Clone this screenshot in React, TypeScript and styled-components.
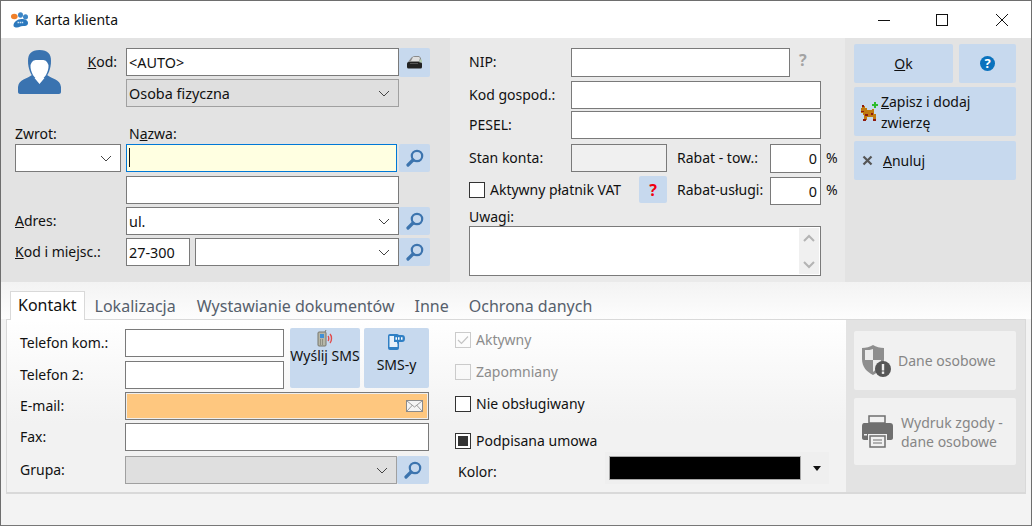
import styled, { createGlobalStyle } from "styled-components";

const GlobalStyle = createGlobalStyle`
  html, body {
    margin: 0;
    padding: 0;
    background: #f3f3f3;
  }
  * {
    box-sizing: border-box;
  }
`;

const Window = styled.div`
  width: 1032px;
  height: 526px;
  border: 1px solid #6e6e6e;
  border-bottom-color: #777;
  background: #f3f3f3;
  color: #111;
  font-family: "Noto Sans", "Open Sans", sans-serif;
  font-size: 14px;
  line-height: 18px;
  overflow: hidden;
  display: flex;
  flex-direction: column;
`;

const TitleBar = styled.div`
  height: 37px;
  background: #fff;
  display: flex;
  align-items: center;
  padding-left: 9px;
  flex-shrink: 0;
`;

const TitleText = styled.div`
  margin-left: 6px;
  flex: 1;
`;

const WinButton = styled.div<{ $w: number }>`
  width: ${(p) => p.$w}px;
  height: 37px;
  display: flex;
  align-items: center;
  justify-content: center;
`;

const Header = styled.div`
  display: flex;
  height: 244px;
  flex-shrink: 0;
`;

const LeftPanel = styled.div`
  width: 449px;
  background: #e3e3e3;
  padding: 10px 0 0 14px;
  display: flex;
  flex-direction: column;
`;

const MidPanel = styled.div`
  width: 395px;
  background: #eaeaea;
  padding: 10px 0 0 19px;
  display: flex;
  flex-direction: column;
`;

const RightPanel = styled.div`
  flex: 1;
  background: #e3e3e3;
  padding: 6px 0 0 9px;
  display: flex;
  flex-direction: column;
`;

const TopBlock = styled.div`
  display: flex;
`;

const AvatarIcon = styled.svg`
  width: 43px;
  height: 44px;
  margin: 2px 0 0 3px;
  flex-shrink: 0;
`;

const TopFields = styled.div`
  display: flex;
  flex-direction: column;
`;

const Row = styled.div<{ $mt?: number; $pl?: number; $h?: number }>`
  display: flex;
  align-items: flex-start;
  margin-top: ${(p) => p.$mt ?? 0}px;
  padding-left: ${(p) => p.$pl ?? 0}px;
  height: ${(p) => p.$h ?? 28}px;
`;

const Label = styled.div<{ $w?: number; $right?: boolean; $pr?: number; $ml?: number }>`
  width: ${(p) => p.$w ?? 100}px;
  margin-left: ${(p) => p.$ml ?? 0}px;
  padding-right: ${(p) => p.$pr ?? 0}px;
  text-align: ${(p) => (p.$right ? "right" : "left")};
  height: 28px;
  line-height: 27px;
  white-space: nowrap;
  flex-shrink: 0;
`;

const CaptionRow = styled.div`
  height: 37px;
  display: flex;
  align-items: flex-end;
  padding-bottom: 1px;
`;

const Caption = styled.div<{ $w?: number }>`
  width: ${(p) => p.$w ?? 114}px;
  line-height: 18px;
  flex-shrink: 0;
`;

const Field = styled.div<{ $w: number; $h?: number; $bg?: string; $ml?: number; $mt?: number; $align?: string }>`
  width: ${(p) => p.$w}px;
  height: ${(p) => p.$h ?? 28}px;
  margin-left: ${(p) => p.$ml ?? 0}px;
  margin-top: ${(p) => p.$mt ?? 0}px;
  background: ${(p) => p.$bg ?? "#fff"};
  border: 1px solid #7a7a7a;
  padding: 0 3px 0 2px;
  font-size: 14.4px;
  line-height: 27px;
  text-align: ${(p) => p.$align ?? "left"};
  flex-shrink: 0;
`;

const FocusField = styled(Field)`
  background: #ffffe1;
  border-color: #0078d7;
`;

const Caret = styled.div`
  width: 1px;
  height: 19px;
  margin: 3px 0 0 0;
  background: #111;
`;

const MailField = styled(Field)`
  background: #fec77f;
  box-shadow: inset 0 0 0 1px #eee;
  display: flex;
  align-items: center;
  justify-content: flex-end;
  padding: 0 5px 0 0;
`;

const SelectField = styled(Field)<{ $muted?: boolean }>`
  background: ${(p) => (p.$muted ? "#dfdfdf" : "#fff")};
  border-color: ${(p) => (p.$muted ? "#a0a0a0" : "#7a7a7a")};
  display: flex;
  align-items: center;
  justify-content: space-between;
  padding: 1px 8px 0 2px;
`;

const IconButton = styled.div<{ $w?: number; $h?: number; $ml?: number }>`
  width: ${(p) => p.$w ?? 31}px;
  height: ${(p) => p.$h ?? 28}px;
  margin-left: ${(p) => p.$ml ?? 0}px;
  background: #c7d9ee;
  border-radius: 2px;
  display: flex;
  align-items: center;
  justify-content: center;
  flex-shrink: 0;
`;

const RedMark = styled.span`
  color: #f00010;
  font-weight: 700;
  font-size: 16px;
`;

const GrayMark = styled.span`
  width: 30px;
  padding-left: 9px;
  color: #a3a3a3;
  font-weight: 700;
  font-size: 16px;
  line-height: 24px;
`;

const Percent = styled.span`
  margin-left: 5px;
  line-height: 27px;
`;

const CheckRow = styled.div<{ $mt?: number; $disabled?: boolean }>`
  display: flex;
  align-items: center;
  height: 16px;
  margin-top: ${(p) => p.$mt ?? 0}px;
  color: ${(p) => (p.$disabled ? "#8c8c8c" : "#111")};
  white-space: nowrap;
`;

const Check = styled.div<{ $disabled?: boolean }>`
  width: 16px;
  height: 16px;
  border: 1px solid ${(p) => (p.$disabled ? "#cbcbcb" : "#333")};
  background: ${(p) => (p.$disabled ? "transparent" : "#fff")};
  margin-right: 5px;
  display: flex;
  align-items: center;
  justify-content: center;
  flex-shrink: 0;
`;

const CheckFill = styled.div`
  width: 10px;
  height: 10px;
  background: #333;
`;

const VatBox = styled.div`
  width: 170px;
  height: 27px;
  display: flex;
  align-items: center;
  flex-shrink: 0;
`;

const NoteCaption = styled.div`
  height: 18px;
  margin-top: 3px;
  line-height: 18px;
`;

const NoteBox = styled.div`
  width: 352px;
  height: 50px;
  border: 1px solid #7a7a7a;
  background: #fff;
  display: flex;
  justify-content: flex-end;
  padding: 1px;
`;

const ScrollBar = styled.div`
  width: 20px;
  background: #f0f0f0;
  display: flex;
  flex-direction: column;
  align-items: center;
  justify-content: space-between;
  padding: 6px 0 5px;
`;

const ActionRow = styled.div<{ $mt?: number }>`
  display: flex;
  gap: 6px;
  margin-top: ${(p) => p.$mt ?? 0}px;
`;

const ActionButton = styled.div<{ $w?: number; $h?: number; $center?: boolean }>`
  width: ${(p) => p.$w ?? 162}px;
  height: ${(p) => p.$h ?? 39}px;
  background: #c7d9ee;
  border-radius: 2px;
  display: flex;
  align-items: center;
  justify-content: ${(p) => (p.$center ? "center" : "flex-start")};
  padding-left: ${(p) => (p.$center ? 0 : 5)}px;
  line-height: 21px;
`;

const ActionText = styled.div<{ $ml?: number; $mt?: number }>`
  margin-left: ${(p) => p.$ml ?? 0}px;
  margin-top: ${(p) => p.$mt ?? 0}px;
`;

const HelpDot = styled.div`
  width: 15px;
  height: 15px;
  border-radius: 50%;
  background: #0a72bd;
  color: #fff;
  font-weight: 700;
  font-size: 13px;
  line-height: 15px;
  text-align: center;
`;

const TabStrip = styled.div`
  height: 37px;
  flex-shrink: 0;
  display: flex;
  align-items: flex-end;
  padding-left: 9px;
  background: linear-gradient(#f3f3f3, #fdfdfd);
`;

const Tab = styled.div<{ $active?: boolean; $ml?: number }>`
  height: ${(p) => (p.$active ? 29 : 27)}px;
  margin-left: ${(p) => p.$ml ?? 0}px;
  margin-bottom: ${(p) => (p.$active ? -1 : 0)}px;
  padding: 0 7px;
  font-size: 16px;
  line-height: 27px;
  color: ${(p) => (p.$active ? "#111" : "#56606c")};
  background: ${(p) => (p.$active ? "#fff" : "transparent")};
  border: 1px solid ${(p) => (p.$active ? "#d9d9d9" : "transparent")};
  border-bottom: none;
  position: relative;
  z-index: 1;
  white-space: nowrap;
`;

const TabPanel = styled.div`
  width: 1020px;
  height: 175px;
  margin-left: 5px;
  border: 1px solid #d9d9d9;
  border-bottom-width: 2px;
  background: linear-gradient(#fff, #f2f2f2 60%);
  display: flex;
  flex-shrink: 0;
`;

const FormColumn = styled.div`
  width: 422px;
  padding: 9px 0 0 13px;
  flex-shrink: 0;
`;

const PhoneBlock = styled.div`
  display: flex;
`;

const PhoneFields = styled.div`
  width: 270px;
  flex-shrink: 0;
`;

const SmsButton = styled.div<{ $w: number; $ml: number; $top: number }>`
  width: ${(p) => p.$w}px;
  height: 60px;
  margin-left: ${(p) => p.$ml}px;
  margin-top: -1px;
  padding-top: ${(p) => p.$top}px;
  background: #c7d9ee;
  border-radius: 2px;
  display: flex;
  flex-direction: column;
  align-items: center;
  white-space: nowrap;
  line-height: 18px;
  flex-shrink: 0;
`;

const ChecksColumn = styled.div`
  width: 417px;
  padding: 12px 0 0 26px;
  flex-shrink: 0;
`;

const ColorRow = styled.div`
  display: flex;
  align-items: center;
  margin-top: 3px;
  padding-left: 3px;
`;

const ColorLabel = styled.div`
  width: 147px;
  padding-top: 7px;
`;

const ColorPicker = styled.div`
  width: 224px;
  height: 32px;
  background: #efefef;
  display: flex;
  align-items: center;
  padding-left: 4px;
`;

const ColorSwatch = styled.div`
  width: 192px;
  height: 24px;
  background: #000;
  border: 1px solid #a8a8a8;
`;

const ColorArrow = styled.div`
  margin-left: 12px;
  width: 0;
  height: 0;
  border-left: 4px solid transparent;
  border-right: 4px solid transparent;
  border-top: 5px solid #111;
`;

const SidePanel = styled.div`
  flex: 1;
  background: #e3e3e3;
  padding: 11px 0 0 8px;
`;

const SideButton = styled.div<{ $h: number; $mt?: number }>`
  width: 162px;
  height: ${(p) => p.$h}px;
  margin-top: ${(p) => p.$mt ?? 0}px;
  background: #f1f1f1;
  border-radius: 2px;
  color: #868686;
  display: flex;
  align-items: center;
  padding-left: 7px;
  line-height: 19px;
`;

const SideText = styled.div`
  margin-left: 7px;
`;

const CrossSvg = styled.svg`
  width: 11px;
  height: 11px;
  margin-left: 3px;
`;

const Chevron = () => (
  <svg width="12" height="7" viewBox="0 0 12 7" fill="none">
    <path d="M1 1l5 5 5-5" stroke="#444" strokeWidth="1" />
  </svg>
);

const ScrollChevron = ({ up }: { up?: boolean }) => (
  <svg width="12" height="8" viewBox="0 0 12 8" fill="none">
    <path d={up ? "M1 7l5-5 5 5" : "M1 1l5 5 5-5"} stroke="#b4b4b4" strokeWidth="2" />
  </svg>
);

const SearchIcon = () => (
  <svg width="18" height="18" viewBox="0 0 18 18" fill="none">
    <circle cx="11" cy="7" r="5.2" stroke="#3c74ae" strokeWidth="2.2" />
    <path d="M7 11L2 16" stroke="#3c74ae" strokeWidth="3.2" strokeLinecap="round" />
  </svg>
);

const PawLogo = () => (
  <svg width="19" height="18" viewBox="0 0 19 18">
    <ellipse cx="4.300" cy="5.500" rx="3.300" ry="2.700" fill="#f0802a" />
    <ellipse cx="10.500" cy="4" rx="2.500" ry="2.800" fill="#3d86c6" />
    <ellipse cx="15.500" cy="5.800" rx="2.500" ry="2.600" fill="#3d86c6" />
    <path d="M3.500 14.500c0-3.500 4-6.500 8-6.500 4 0 6.500 1.500 6.500 4s-2 3-5 3-3.500 1.500-6 1.500c-2 0-3.500-.5-3.500-2z" fill="#2b78bd" />
    <path d="M7.500 11.500h6" stroke="#cfe3f5" strokeWidth="1.600" strokeDasharray="1.500 .6" />
  </svg>
);

const Avatar = () => (
  <AvatarIcon viewBox="0 0 43 44">
    <path d="M13 24l8.500 12 8.500-12z" fill="#fff" />
    <path d="M14 25C9 29 1 29 0 37v5c0 1 1 2 2 2h39c1 0 2-1 2-2v-5c-1-8-9-8-14-12l-7.500 9z" fill="#3a73b0" />
    <path d="M21.500 0C13 0 10 4 10 11c0 8 3 14 6 17h11c3-3 6-9 6-17 0-7-3-11-11.500-11z" fill="#3a73b0" />
    <path d="M12.500 15c2.500-6 4.500-5 9-5s6.500-1 9 5c.5 7-4.500 15-9 15s-9.500-8-9-15z" fill="#fff" />
  </AvatarIcon>
);

const LabelPrinter = () => (
  <svg width="15" height="13" viewBox="0 0 15 13">
    <path d="M1 6l3-4c1-1 2-2 4-2h4l2 2v4z" fill="#8a8a8a" />
    <path d="M6 1h6l1 1-1 3H4z" fill="#dedede" />
    <rect x="0" y="6" width="15" height="6.500" rx="1.500" fill="#222" />
    <rect x="3" y="7" width="8" height="1" fill="#555" />
    <rect x="12.500" y="3.500" width="2.500" height="3" fill="#b5cdb5" />
  </svg>
);

const DogIcon = () => (
  <svg width="19" height="21" viewBox="0 0 19 21" shapeRendering="crispEdges">
    <path d="M3 5h3v2h2v2h5V8h2v5h2v6h-3v-3H8v3H5v-5H4v-2H2V7h1z" fill="#c07a10" />
    <path d="M2 10h3v1H2zM3 4h2v2H3zM4 18h3v2H4zM14 18h3v2h-3zM6 13h3v2H6zM12 12h2v2h-2z" fill="#8c1a10" />
    <path d="M13 3h2V1h2v2h2v2h-2v2h-2V5h-2z" fill="#2dbb2d" />
  </svg>
);

const CrossIcon = () => (
  <CrossSvg viewBox="0 0 11 11">
    <path d="M1.500 1.500l8 8M9.500 1.500l-8 8" stroke="#555" strokeWidth="2.200" />
  </CrossSvg>
);

const Envelope = () => (
  <svg width="17" height="12" viewBox="0 0 17 12">
    <rect x=".5" y=".5" width="16" height="11" fill="#f4f4f4" stroke="#8a8a8a" />
    <path d="M1 1l7.500 6L16 1M1 11l5.500-6M16 11l-5.500-6" fill="none" stroke="#9a9a9a" />
  </svg>
);

const PhoneSignal = () => (
  <svg width="16" height="17" viewBox="0 0 16 17">
    <rect x="1" y="2" width="8" height="14" rx="1" fill="#b7b7a8" stroke="#77776c" />
    <rect x="3" y="4" width="4" height="4" fill="#3f8fd6" />
    <path d="M3 10h4M3 12h4M3 14h4" stroke="#66665c" strokeDasharray="1 1" />
    <path d="M8 2l1-2" stroke="#77776c" />
    <path d="M11 6c1 1 1 4 0 5M13 4c2 2 2 7 0 9" fill="none" stroke="#e24a4a" strokeWidth="1.400" />
  </svg>
);

const SmsBubble = () => (
  <svg width="17" height="16" viewBox="0 0 17 16">
    <rect x="0" y="0" width="11" height="16" rx="2" fill="#2f7fc4" />
    <rect x="1.500" y="2" width="8" height="11" fill="#e8f1fa" />
    <path d="M6 1h8c2 0 3 1 3 3.500S16 8 14 8h-3l-2 2V8H6z" fill="#2f7fc4" />
    <path d="M7.500 4.500h1.500M10 4.500h2M13 4.500h2" stroke="#fff" strokeWidth="2.400" strokeDasharray="1.500 .5" />
  </svg>
);

const ShieldIcon = () => (
  <svg width="30" height="34" viewBox="0 0 30 34">
    <path d="M12 1c3 2 7 3 11 3v11c0 8-5 13-11 16C6 28 1 23 1 15V4c4 0 8-1 11-3z" fill="#8e8e8e" />
    <path d="M12 5v11H4V6c3 0 6 0 8-1zM12 16h8c0 6-4 9-8 12z" fill="#ececec" />
    <circle cx="22" cy="25" r="8" fill="#565656" />
    <rect x="20.800" y="20" width="2.400" height="6.500" fill="#eee" />
    <rect x="20.800" y="27.500" width="2.400" height="2.400" fill="#eee" />
  </svg>
);

const PrinterIcon = () => (
  <svg width="33" height="33" viewBox="0 0 33 33">
    <path d="M8 1h16v7H8z" fill="none" stroke="#6f6f6f" strokeWidth="1.500" />
    <path d="M3 8h26c2 0 3 1 3 3v12c0 1-1 2-2 2h-4v-6H7v6H3c-1 0-2-1-2-2V11c0-2 1-3 2-3z" fill="#6f6f6f" />
    <path d="M9 21h15v11H9z" fill="#f1f1f1" stroke="#6f6f6f" strokeWidth="1.500" />
    <path d="M12 25h9M12 28h9" stroke="#6f6f6f" />
    <rect x="3" y="19" width="3" height="1.500" fill="#eee" />
  </svg>
);

export default function App() {
  return (
    <>
      <GlobalStyle />
      <Window>
        <TitleBar>
          <PawLogo />
          <TitleText>Karta klienta</TitleText>
          <WinButton $w={54}>
            <svg width="12" height="12" viewBox="0 0 12 12">
              <path d="M0 6.500h12" stroke="#111" />
            </svg>
          </WinButton>
          <WinButton $w={62}>
            <svg width="12" height="12" viewBox="0 0 12 12" fill="none">
              <rect x=".5" y=".5" width="11" height="11" stroke="#111" />
            </svg>
          </WinButton>
          <WinButton $w={58}>
            <svg width="12" height="12" viewBox="0 0 12 12">
              <path d="M0 0l12 12M12 0L0 12" stroke="#111" />
            </svg>
          </WinButton>
        </TitleBar>

        <Header>
          <LeftPanel>
            <TopBlock>
              <Avatar />
              <TopFields>
                <Row $h={29}>
                  <Label $w={65} $right $pr={9}>
                    <u>K</u>od:
                  </Label>
                  <Field $w={273}>&lt;AUTO&gt;</Field>
                  <IconButton $h={29}>
                    <LabelPrinter />
                  </IconButton>
                </Row>
                <Row $mt={2} $pl={65}>
                  <SelectField $w={273} $muted>
                    Osoba fizyczna
                    <Chevron />
                  </SelectField>
                </Row>
              </TopFields>
            </TopBlock>
            <CaptionRow>
              <Caption>Zwrot:</Caption>
              <Caption>
                N<u>a</u>zwa:
              </Caption>
            </CaptionRow>
            <Row>
              <SelectField $w={106}>
                <span />
                <Chevron />
              </SelectField>
              <FocusField $w={271} $ml={5}>
                <Caret />
              </FocusField>
              <IconButton $ml={2}>
                <SearchIcon />
              </IconButton>
            </Row>
            <Row $mt={4} $pl={111}>
              <Field $w={273} />
            </Row>
            <Row $mt={3}>
              <Label $w={111}>
                <u>A</u>dres:
              </Label>
              <SelectField $w={273}>
                ul.
                <Chevron />
              </SelectField>
              <IconButton>
                <SearchIcon />
              </IconButton>
            </Row>
            <Row $mt={3}>
              <Label $w={111}>
                <u>K</u>od i miejsc.:
              </Label>
              <Field $w={64}>27-300</Field>
              <SelectField $w={204} $ml={5}>
                <span />
                <Chevron />
              </SelectField>
              <IconButton>
                <SearchIcon />
              </IconButton>
            </Row>
          </LeftPanel>

          <MidPanel>
            <Row $h={29}>
              <Label $w={102}>NIP:</Label>
              <Field $w={219} $h={29} />
              <GrayMark>?</GrayMark>
            </Row>
            <Row $mt={4}>
              <Label $w={102}>Kod gospod.:</Label>
              <Field $w={250} />
            </Row>
            <Row $mt={2}>
              <Label $w={102}>PESEL:</Label>
              <Field $w={250} />
            </Row>
            <Row $mt={5} $h={29}>
              <Label $w={102}>Stan konta:</Label>
              <Field $w={96} $bg="#f0f0f0" />
              <Label $w={93} $ml={10}>
                Rabat - tow.:
              </Label>
              <Field $w={51} $h={29} $align="right">
                0
              </Field>
              <Percent>%</Percent>
            </Row>
            <Row $mt={3} $h={29}>
              <VatBox>
                <Check />
                Aktywny płatnik VAT
              </VatBox>
              <IconButton $w={28} $h={27}>
                <RedMark>?</RedMark>
              </IconButton>
              <Label $w={93} $ml={10}>
                Rabat-usługi:
              </Label>
              <Field $w={51} $mt={1} $align="right">
                0
              </Field>
              <Percent>%</Percent>
            </Row>
            <NoteCaption>Uwagi:</NoteCaption>
            <NoteBox>
              <ScrollBar>
                <ScrollChevron up />
                <ScrollChevron />
              </ScrollBar>
            </NoteBox>
          </MidPanel>

          <RightPanel>
            <ActionRow>
              <ActionButton $w={99} $center>
                <span>
                  <u>O</u>k
                </span>
              </ActionButton>
              <ActionButton $w={57} $center>
                <HelpDot>?</HelpDot>
              </ActionButton>
            </ActionRow>
            <ActionRow $mt={4}>
              <ActionButton $h={49}>
                <DogIcon />
                <ActionText $ml={3}>
                  <u>Z</u>apisz i dodaj
                  <br />
                  zwierzę
                </ActionText>
              </ActionButton>
            </ActionRow>
            <ActionRow $mt={5}>
              <ActionButton>
                <CrossIcon />
                <ActionText $ml={10}>
                  <u>A</u>nuluj
                </ActionText>
              </ActionButton>
            </ActionRow>
          </RightPanel>
        </Header>

        <TabStrip>
          <Tab $active>Kontakt</Tab>
          <Tab $ml={2}>Lokalizacja</Tab>
          <Tab $ml={5}>Wystawianie dokumentów</Tab>
          <Tab $ml={4}>Inne</Tab>
          <Tab $ml={4}>Ochrona danych</Tab>
        </TabStrip>

        <TabPanel>
          <FormColumn>
            <PhoneBlock>
              <PhoneFields>
                <Row>
                  <Label $w={105}>Telefon kom.:</Label>
                  <Field $w={159} />
                </Row>
                <Row $mt={4}>
                  <Label $w={105}>Telefon 2:</Label>
                  <Field $w={159} />
                </Row>
              </PhoneFields>
              <SmsButton $w={70} $ml={0} $top={2}>
                <PhoneSignal />
                Wyślij SMS
              </SmsButton>
              <SmsButton $w={65} $ml={4} $top={6}>
                <SmsBubble />
                <ActionText $mt={6}>SMS-y</ActionText>
              </SmsButton>
            </PhoneBlock>
            <Row $mt={3}>
              <Label $w={105}>E-mail:</Label>
              <MailField $w={304}>
                <Envelope />
              </MailField>
            </Row>
            <Row $mt={3}>
              <Label $w={105}>Fax:</Label>
              <Field $w={304} />
            </Row>
            <Row $mt={5}>
              <Label $w={105}>Grupa:</Label>
              <SelectField $w={272} $muted>
                <span />
                <Chevron />
              </SelectField>
              <IconButton $w={32}>
                <SearchIcon />
              </IconButton>
            </Row>
          </FormColumn>

          <ChecksColumn>
            <CheckRow $disabled>
              <Check $disabled>
                <svg width="12" height="10" viewBox="0 0 12 10" fill="none">
                  <path d="M1 5l3.500 3.500L11 1.500" stroke="#c4c4c4" strokeWidth="1.200" />
                </svg>
              </Check>
              Aktywny
            </CheckRow>
            <CheckRow $mt={16} $disabled>
              <Check $disabled />
              Zapomniany
            </CheckRow>
            <CheckRow $mt={16}>
              <Check />
              Nie obsługiwany
            </CheckRow>
            <CheckRow $mt={21}>
              <Check>
                <CheckFill />
              </Check>
              Podpisana umowa
            </CheckRow>
            <ColorRow>
              <ColorLabel>Kolor:</ColorLabel>
              <ColorPicker>
                <ColorSwatch />
                <ColorArrow />
              </ColorPicker>
            </ColorRow>
          </ChecksColumn>

          <SidePanel>
            <SideButton $h={59}>
              <ShieldIcon />
              <SideText>Dane osobowe</SideText>
            </SideButton>
            <SideButton $h={67} $mt={8}>
              <PrinterIcon />
              <SideText>
                Wydruk zgody -
                <br />
                dane osobowe
              </SideText>
            </SideButton>
          </SidePanel>
        </TabPanel>
      </Window>
    </>
  );
}
